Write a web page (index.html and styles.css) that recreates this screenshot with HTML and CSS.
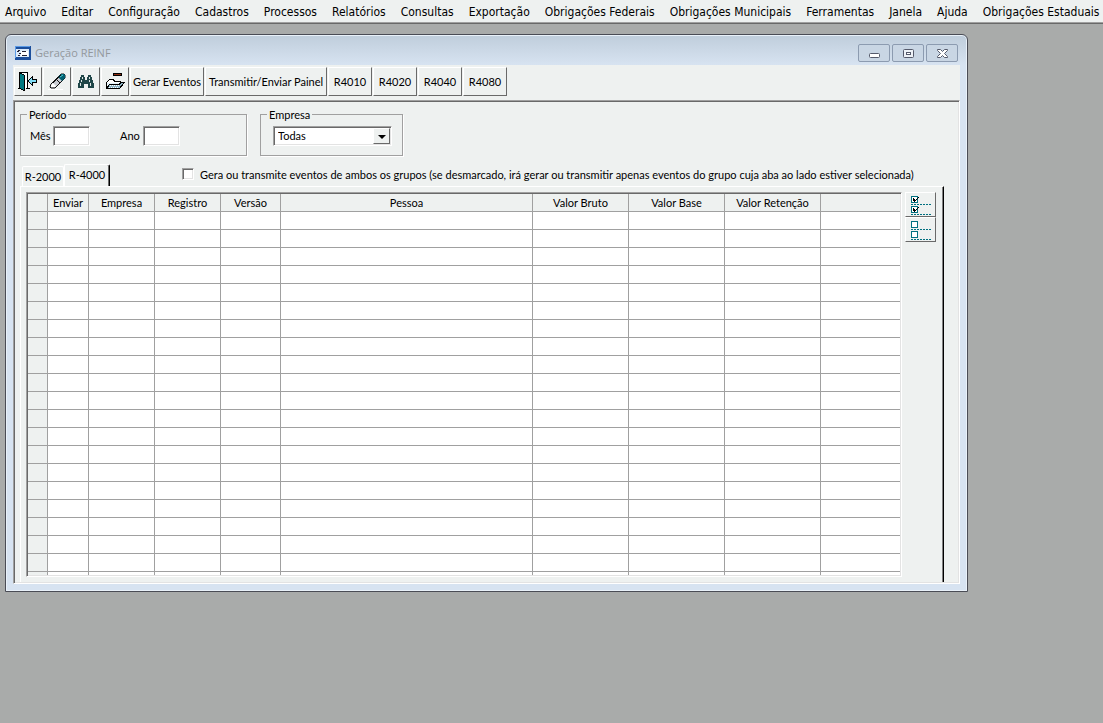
FILE: index.html
```
<!DOCTYPE html>
<html lang="pt-BR">

<head>
    <meta charset="UTF-8">
    <meta name="viewport" content="width=device-width, initial-scale=1.0">
    <title>Geração REINF</title>
    <link rel="stylesheet" href="styles.css">
</head>

<body>
    <nav class="menu">
        <a href="#">Arquivo</a>
        <a href="#">Editar</a>
        <a href="#">Configuração</a>
        <a href="#">Cadastros</a>
        <a href="#">Processos</a>
        <a href="#">Relatórios</a>
        <a href="#">Consultas</a>
        <a href="#">Exportação</a>
        <a href="#">Obrigações Federais</a>
        <a href="#">Obrigações Municipais</a>
        <a href="#">Ferramentas</a>
        <a href="#">Janela</a>
        <a href="#">Ajuda</a>
        <a href="#">Obrigações Estaduais</a>
    </nav>

    <main class="desktop">
        <section class="window">
            <header class="title">
                <svg class="app-icon" width="16" height="14" viewBox="0 0 16 14" shape-rendering="crispEdges">
                    <path fill="#1c4f9c" d="M0 0h16v14H0z"/>
                    <path fill="#5c9be6" d="M0 0h15v1H0zM0 1h1v11H0z"/>
                    <path fill="#dcebfa" d="M1 3h13v8H1z"/>
                    <path fill="#fff" d="M6 5h7v5H6z"/>
                    <path fill="#223" d="M3 4h2v1H3zM2 5h2v1H2zM7 5h4v1H7zM4 7h2v1H4zM3 9h2v1H3zM7 9h5v1H7z"/>
                </svg>
                <h1>Geração REINF</h1>
                <div class="win-btns">
                    <button type="button" aria-label="Minimizar">
                        <svg width="13" height="11" viewBox="0 0 13 11"><rect x="1.500" y="5.500" width="10" height="4" rx="1" fill="#fff" stroke="#555a6b"/></svg>
                    </button>
                    <button type="button" aria-label="Maximizar">
                        <svg width="13" height="11" viewBox="0 0 13 11"><rect x="1.500" y="1.500" width="10" height="8" rx="1" fill="#eef2f7" stroke="#555a6b"/><rect x="4.500" y="4.500" width="4" height="2" fill="#fff" stroke="#555a6b"/></svg>
                    </button>
                    <button type="button" aria-label="Fechar">
                        <svg width="13" height="11" viewBox="0 0 13 11"><path d="M1.500 1.500h3l2 2 2-2h3v1l-3 3 3 3v1h-3l-2-2-2 2h-3v-1l3-3-3-3z" fill="#fff" stroke="#555a6b"/></svg>
                    </button>
                </div>
            </header>

            <div class="client">
                <div class="toolbar">
                    <button type="button" class="icon" aria-label="Sair">
                        <svg width="20" height="20" viewBox="0 0 20 20" shape-rendering="crispEdges">
                            <path fill="#fff" d="M3 1h7v15H3z"/>
                            <path fill="none" stroke="#000" d="M1.500 16.500v-16h8v16M0 16.500h2M8 16.500h4"/>
                            <path fill="#007880" stroke="#000" d="M1.500.5l5 3v15l-5-2z"/>
                            <path fill="#7fdcf5" stroke="#000" d="M10.500 8.500l4-4v3h4v3h-4v3l-4-4z"/>
                        </svg>
                    </button>
                    <button type="button" class="icon" aria-label="Limpar">
                        <svg width="20" height="20" viewBox="0 0 20 20">
                            <path fill="#fff" d="M1 17h15v1H1z"/>
                            <path fill="#c9ccd2" stroke="#111" d="M4 12L14 2h3l1 1v3L8 16H4l-1-1z"/>
                            <path fill="#fff" d="M4 13l2-2 3 3-1 1H4z"/>
                            <path fill="#005f70" d="M11 5l3-3h3l1 1v3l-3 3z"/>
                            <path fill="none" stroke="#111" d="M9 7l4 4M6 11l8-8"/>
                            <path fill="none" stroke="#4fd0d8" d="M13 5l3-2"/>
                        </svg>
                    </button>
                    <button type="button" class="icon" aria-label="Localizar">
                        <svg width="20" height="20" viewBox="0 0 20 20" shape-rendering="crispEdges">
                            <path fill="#1f4648" d="M5 3h3v2H5zM12 3h3v2h-3zM4 5h5v3H4zM11 5h5v3h-5zM3 8h14v3H3zM2 11h6v5H2zM12 11h6v5h-6zM8 11h4v1H8z"/>
                            <path fill="#dfe6e6" d="M6 5h1v2H6zM13 5h1v2h-1zM5 8h1v2H5zM13 8h1v2h-1zM4 11h1v3H4zM14 11h1v3h-1z"/>
                        </svg>
                    </button>
                    <button type="button" class="icon" aria-label="Imprimir">
                        <svg width="20" height="20" viewBox="0 0 20 20" shape-rendering="crispEdges">
                            <path fill="#8c2c10" stroke="#000" d="M8.500 1.500h8v2h-8z"/>
                            <path fill="#fff" stroke="#000" d="M1.500 16.500v-6l3-3h4l1 2h6v2"/>
                            <path fill="#e4f3fa" d="M2 11h13v2H2z"/>
                            <path fill="#8fb6c8" stroke="#000" d="M1.500 16.500l3-4h10l1-2h4l-5 6z"/>
                            <path fill="none" stroke="#fff" stroke-dasharray="1 1" d="M5 13.500h10M4 15.500h10"/>
                        </svg>
                    </button>
                    <button type="button" class="wide">Gerar Eventos</button>
                    <button type="button" class="wider">Transmitir/Enviar Painel</button>
                    <button type="button">R4010</button>
                    <button type="button">R4020</button>
                    <button type="button">R4040</button>
                    <button type="button">R4080</button>
                </div>

                <div class="panel">
                    <div class="filters">
                        <fieldset class="periodo">
                            <legend>Período</legend>
                            <label for="mes">Mês</label>
                            <input type="text" id="mes">
                            <label for="ano">Ano</label>
                            <input type="text" id="ano">
                        </fieldset>
                        <fieldset class="empresa">
                            <legend>Empresa</legend>
                            <div class="combo">
                                <select id="empresa" aria-label="Empresa">
                                    <option>Todas</option>
                                </select>
                                <span class="arrow"></span>
                            </div>
                        </fieldset>
                    </div>

                    <div class="tabs">
                        <button type="button" class="tab">R-2000</button>
                        <button type="button" class="tab on">R-4000</button>
                        <input type="checkbox" id="ambos">
                        <label for="ambos">Gera ou transmite eventos de ambos os grupos (se desmarcado, irá gerar ou transmitir apenas eventos do grupo cuja aba ao lado estiver selecionada)</label>
                    </div>

                    <div class="page">
                        <div class="grid">
                            <div class="scroll">
                                <table>
                                    <colgroup>
                                        <col class="c-mark">
                                        <col class="c-enviar">
                                        <col class="c-empresa">
                                        <col class="c-empresa">
                                        <col class="c-versao">
                                        <col class="c-pessoa">
                                        <col class="c-valor">
                                        <col class="c-valor">
                                        <col class="c-valor">
                                        <col>
                                    </colgroup>
                                    <thead>
                                        <tr>
                                            <th></th>
                                            <th>Enviar</th>
                                            <th>Empresa</th>
                                            <th>Registro</th>
                                            <th>Versão</th>
                                            <th>Pessoa</th>
                                            <th>Valor Bruto</th>
                                            <th>Valor Base</th>
                                            <th>Valor Retenção</th>
                                            <th></th>
                                        </tr>
                                    </thead>
                                    <tbody id="rows"></tbody>
                                </table>
                            </div>
                        </div>
                        <div class="side">
                            <button type="button" aria-label="Marcar todos">
                                <svg width="22" height="20" viewBox="0 0 22 20" shape-rendering="crispEdges">
                                    <path fill="#fff" stroke="#007080" d="M1.500 1.500h6v6h-6zM1.500 11.500h6v6h-6z"/>
                                    <path fill="none" stroke="#007080" stroke-dasharray="2 1" d="M1 9.500h20M1 19.500h20"/>
                                    <path fill="#000" d="M3 3h1v1h1v1h1V4h1V3h1V2h1v1H8v1H7v1H6v1H5v1H4V6H3zM3 13h1v1h1v1h1v-1h1v-1h1v-1h1v1H8v1H7v1H6v1H5v1H4v-1H3z"/>
                                </svg>
                            </button>
                            <button type="button" aria-label="Desmarcar todos">
                                <svg width="22" height="20" viewBox="0 0 22 20" shape-rendering="crispEdges">
                                    <path fill="#fff" stroke="#007080" d="M1.500 1.500h6v6h-6zM1.500 11.500h6v6h-6z"/>
                                    <path fill="none" stroke="#007080" stroke-dasharray="2 1" d="M1 9.500h20M1 19.500h20"/>
                                </svg>
                            </button>
                        </div>
                    </div>
                </div>
            </div>
        </section>
    </main>
    <script src="rows.js"></script>
</body>

</html>
```

FILE: rows.js
```
// linhas vazias da grade
var rows = document.getElementById('rows');

for (var i = 0; i < 21; i++) {
    var tr = rows.insertRow();
    for (var j = 0; j < 10; j++) {
        tr.insertCell();
    }
}
```

FILE: styles.css
```
* {
    margin: 0;
    padding: 0;
    box-sizing: border-box;
}

body {
    height: 100vh;
    display: flex;
    flex-direction: column;
    background: #a9abaa;
    font: 11px/14px Lato, sans-serif;
    color: #000;
    overflow: hidden;
}

button, input, select {
    font: inherit;
    color: inherit;
}

svg {
    display: block;
}

/* menu */
.menu {
    height: 24px;
    padding: 0 5px;
    display: flex;
    gap: 15px;
    background: #eef1f0;
    border-bottom: 1px solid #696969;
    box-shadow: inset 0 -1px 0 #a0a0a0;
    font: 12px/24px "DejaVu Sans Condensed", "DejaVu Sans", sans-serif;
}

.menu a {
    color: #000;
    text-decoration: none;
    white-space: nowrap;
}

.desktop {
    flex: 1;
    min-height: 0;
    display: flex;
    padding: 10px 135px 131px 5px;
}

/* janela */
.window {
    flex: 1;
    min-width: 0;
    display: flex;
    flex-direction: column;
    padding: 0 7px 7px;
    border: 1px solid #4a4c55;
    border-radius: 6px 6px 0 0;
    box-shadow: inset 0 0 0 1px #e9f1f9;
    background: #d7e3f1 linear-gradient(#bfcddb, #d7e3f1) no-repeat 0 0 / 100% 30px;
}

.title {
    height: 30px;
    display: flex;
    align-items: center;
    gap: 4px;
    padding: 6px 2px 0;
}

.title h1 {
    flex: 1;
    font: 11px/16px "Open Sans", sans-serif;
    color: #93989d;
}

.win-btns {
    display: flex;
    gap: 2px;
}

.win-btns button {
    width: 32px;
    height: 18px;
    display: flex;
    align-items: center;
    justify-content: center;
    background: #c9d6e4;
    border: 1px solid #8c9bb0;
    border-radius: 2px;
}

.client {
    flex: 1;
    min-height: 0;
    display: flex;
    flex-direction: column;
    background: #eef1f0;
}

/* barra de botões */
.toolbar {
    height: 35px;
    display: flex;
    gap: 1px;
    padding: 2px 1px 4px;
}

.toolbar button, .side button {
    display: flex;
    align-items: center;
    justify-content: center;
    background: #eef1f0;
    border: 1px solid #fff;
    border-right-color: #696969;
    border-bottom-color: #696969;
    white-space: nowrap;
}

.toolbar button {
    width: 44px;
}

.toolbar .icon {
    width: 28px;
}

.toolbar .wide {
    width: 74px;
}

.toolbar .wider {
    width: 122px;
}

/* bordas rebaixadas em dois tons */
.panel, .grid, .periodo input, .combo, .tabs input {
    border: 1px solid #a0a0a0;
    border-right-color: #fff;
    border-bottom-color: #fff;
    box-shadow: inset 1px 1px 0 #696969, inset -1px -1px 0 #e3e3e3;
}

.panel {
    flex: 1;
    min-height: 0;
    display: flex;
    flex-direction: column;
    padding: 1px 1px 1px 6px;
}

.filters {
    display: flex;
    gap: 13px;
    padding-top: 4px;
}

fieldset {
    height: 50px;
    display: flex;
    align-items: flex-start;
    padding: 4px 6px 0;
    border: 1px solid #a0a0a0;
    box-shadow: 1px 1px 0 #fff;
}

legend {
    padding: 2px 2px 0;
    line-height: 14px;
}

.periodo {
    width: 227px;
}

.periodo label {
    width: 26px;
    padding-left: 3px;
    line-height: 20px;
}

.periodo input {
    width: 37px;
    height: 20px;
    margin-right: 27px;
    background: #fff;
}

.empresa {
    width: 143px;
}

.combo {
    width: 119px;
    height: 20px;
    margin-left: 6px;
    padding: 1px;
    position: relative;
    background: #fff;
}

.combo select {
    width: 100%;
    height: 16px;
    padding-left: 3px;
    appearance: none;
    border: 0;
    background: #fff;
    display: block;
}

.arrow {
    position: absolute;
    top: 1px;
    right: 1px;
    width: 17px;
    height: 16px;
    background: #eef1f0;
    border: 1px solid #fff;
    border-right-color: #696969;
    border-bottom-color: #696969;
    pointer-events: none;
}

.arrow::after {
    content: "";
    position: absolute;
    left: 4px;
    top: 6px;
    border: 4px solid transparent;
    border-top-color: #000;
    border-bottom: 0;
}

/* abas */
.tabs {
    height: 30px;
    display: flex;
    align-items: flex-end;
    padding-left: 2px;
}

.tab {
    width: 42px;
    height: 20px;
    background: #eef1f0;
    border: 1px solid #fff;
    border-bottom: 0;
    border-radius: 2px 2px 0 0;
}

.tabs .on {
    width: 46px;
    height: 22px;
    padding-bottom: 2px;
    border-right-color: #000;
    box-shadow: inset -1px 0 0 #696969;
}

.tabs input {
    appearance: none;
    width: 12px;
    height: 12px;
    margin: 0 6px 6px 72px;
    background: #fff;
}

.tabs label {
    margin-bottom: 4px;
    white-space: nowrap;
}

.page {
    flex: 1;
    min-height: 0;
    display: flex;
    gap: 3px;
    margin-right: 14px;
    padding: 5px 7px 5px 5px;
    border: 1px solid #fff;
    border-right-color: #000;
    border-bottom: 0;
    box-shadow: inset -1px 0 0 #808080;
}

/* grade */
.grid {
    flex: 1;
    min-width: 0;
    padding: 1px;
    background: #fff;
}

.scroll {
    height: 100%;
    overflow: hidden;
}

table {
    width: 100%;
    table-layout: fixed;
    border-spacing: 0;
}

th, td {
    height: 18px;
    border-right: 1px solid #a0a0a0;
    border-bottom: 1px solid #a0a0a0;
}

th {
    padding-top: 1px;
    font-weight: normal;
    line-height: 16px;
    white-space: nowrap;
}

th, td:first-child {
    background: #eef1f0;
}

th:last-child, td:last-child {
    border-right: 0;
}

.c-mark {
    width: 20px;
}

.c-enviar {
    width: 41px;
}

.c-empresa {
    width: 66px;
}

.c-versao {
    width: 60px;
}

.c-pessoa {
    width: 252px;
}

.c-valor {
    width: 96px;
}

.side button {
    width: 31px;
    height: 25px;
}
```
